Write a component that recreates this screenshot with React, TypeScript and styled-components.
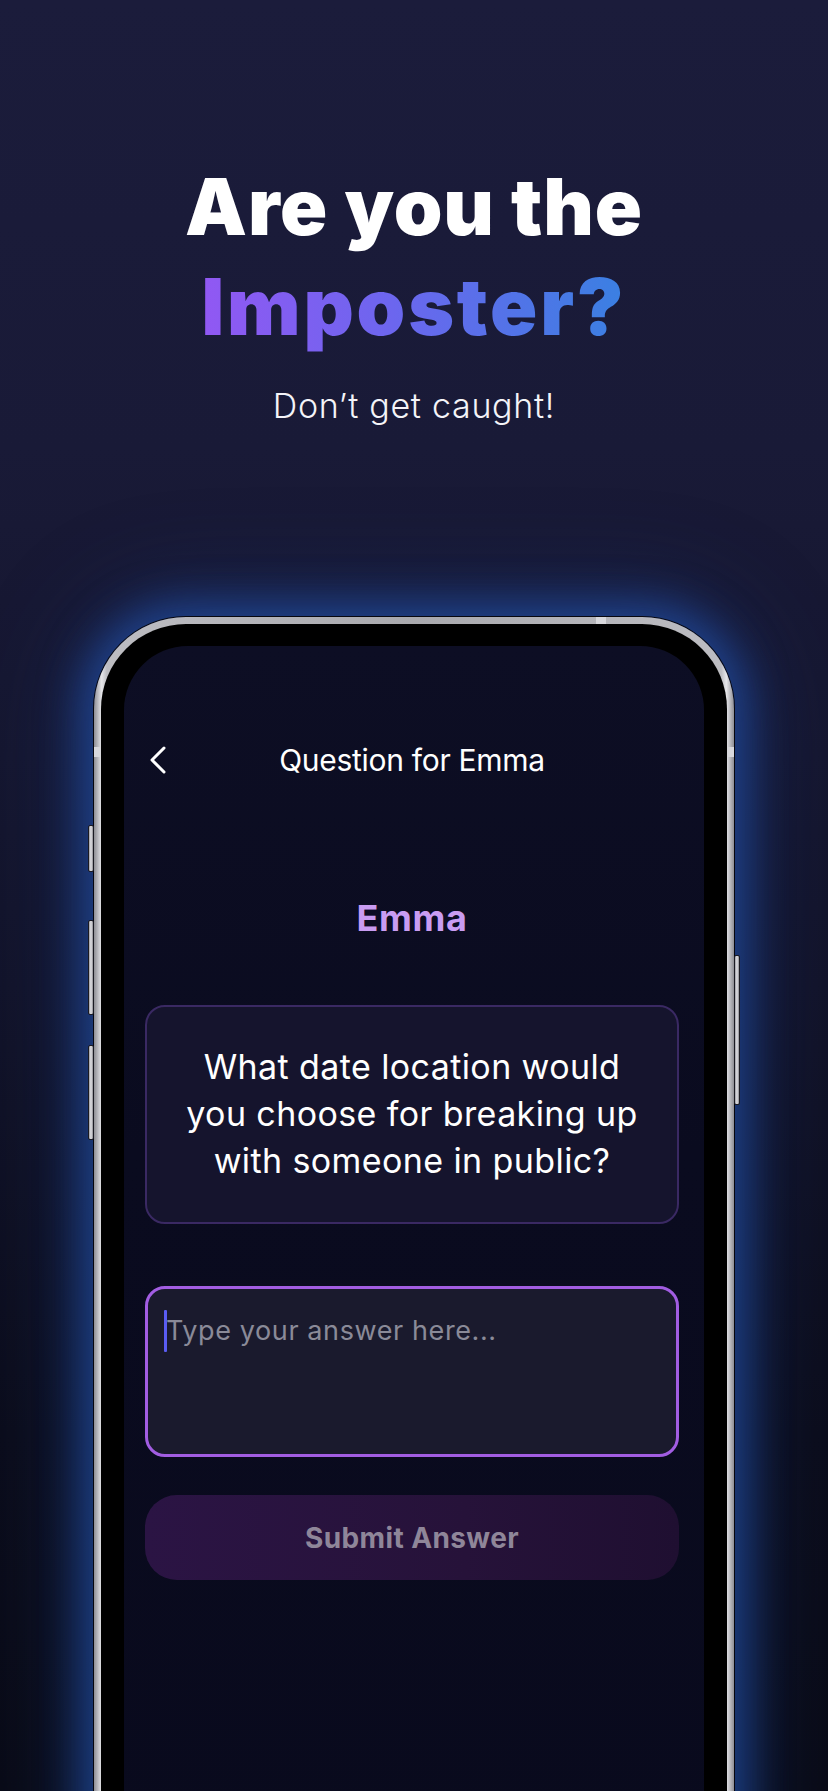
import styled, { createGlobalStyle } from 'styled-components';

const GlobalStyle = createGlobalStyle`
  html, body {
    margin: 0;
    padding: 0;
    background: #0a0b18;
  }
  * {
    box-sizing: border-box;
  }
`;

const Page = styled.div`
  height: 1791px;
  overflow: hidden;
  background: linear-gradient(180deg, #1b1c3b 0%, #191a37 25%, #121329 55%, #0b0c1a 80%, #090a15 100%);
  font-family: Inter, "Noto Sans", sans-serif;
  color: #fff;
`;

const Hero = styled.header`
  padding-top: 157px;
  text-align: center;
`;

const Headline = styled.h1`
  margin: 0;
  font-size: 78px;
  line-height: 100px;
  font-weight: 900;
  letter-spacing: 0.8px;
  color: #fff;
`;

const Accent = styled.span`
  letter-spacing: 2.8px;
  background: linear-gradient(90deg, #9158f3 0%, #6c66ee 45%, #3a80e2 100%);
  -webkit-background-clip: text;
  background-clip: text;
  color: transparent;
`;

const Tagline = styled.p`
  margin: 29px 0 0;
  font-size: 34px;
  line-height: 40px;
  font-weight: 300;
  letter-spacing: 0.7px;
  color: #f4f4f8;
`;

const Phone = styled.div`
  position: relative;
  width: 640px;
  height: 1300px;
  margin: 191px auto 0;
  padding: 7px;
  border-radius: 92px;
  background: linear-gradient(90deg, #8e8e94 0%, #e6e6ea 1.2%, #bdbdc2 2%, #a9a9ae 50%, #bdbdc2 98%, #e6e6ea 98.8%, #8e8e94 100%);
  box-shadow: 0 0 0 1px #07070f, 0 0 40px 14px rgba(34, 80, 168, 0.7), 0 0 90px 30px rgba(28, 60, 130, 0.35);
`;

const SideButton = styled.span<{ $side: 'left' | 'right'; $top: number; $height: number }>`
  position: absolute;
  top: ${(p) => p.$top}px;
  ${(p) => (p.$side === 'left' ? 'left: -6px;' : 'right: -6px;')}
  width: 6px;
  height: ${(p) => p.$height}px;
  border-radius: 2px;
  background: linear-gradient(90deg, #9a9aa0, #e4e4e8 50%, #8a8a90);
  border: 1px solid #1a1a22;
`;

const AntennaBand = styled.span<{ $x?: number; $y?: number }>`
  position: absolute;
  ${(p) => (p.$x !== undefined ? `left: ${p.$x}px; top: 0; width: 10px; height: 7px;` : '')}
  ${(p) => (p.$y !== undefined ? `top: ${p.$y}px; width: 7px; height: 10px;` : '')}
  background: #d8d8dc;
`;

const Bezel = styled.div`
  height: 100%;
  padding: 22px 23px 0;
  border-radius: 85px;
  background: #000;
`;

const Screen = styled.main`
  height: 100%;
  padding: 94px 25px 0 21px;
  border-radius: 64px 64px 0 0;
  background: linear-gradient(180deg, #0d0e24 0%, #0a0b1f 40%, #090a1d 100%);
  display: flex;
  flex-direction: column;
`;

const NavBar = styled.div`
  display: grid;
  grid-template-columns: 48px 1fr 48px;
  align-items: center;
  height: 40px;
`;

const BackButton = styled.button`
  display: flex;
  align-items: center;
  padding: 0 0 0 4px;
  background: none;
  border: none;
  cursor: pointer;
`;

const NavTitle = styled.h2`
  margin: 0;
  text-align: center;
  font-size: 30px;
  line-height: 40px;
  font-weight: 400;
  letter-spacing: -0.3px;
  color: #fff;
`;

const PlayerName = styled.div`
  margin-top: 116px;
  text-align: center;
  font-size: 36px;
  line-height: 44px;
  font-weight: 700;
  letter-spacing: 0.6px;
  color: #c99cf2;
`;

const QuestionCard = styled.div`
  margin-top: 65px;
  padding: 36px 20px 38px;
  border: 2px solid #3a2963;
  border-radius: 20px;
  background: #15142d;
  text-align: center;
  font-size: 34px;
  line-height: 47px;
  letter-spacing: 0.4px;
  color: #fff;
`;

const AnswerBox = styled.div`
  margin-top: 62px;
  height: 171px;
  padding: 21px 16px;
  border: 3px solid #a25de2;
  border-radius: 20px;
  background: #1a1a2d;
  display: flex;
  align-items: flex-start;
`;

const Caret = styled.span`
  width: 3px;
  height: 42px;
  margin-right: -1px;
  border-radius: 1px;
  background: #5a5cf2;
`;

const Placeholder = styled.span`
  font-size: 27px;
  line-height: 42px;
  letter-spacing: 0.6px;
  color: #8a8a98;
`;

const SubmitButton = styled.button`
  margin-top: 38px;
  height: 85px;
  border: none;
  border-radius: 32px;
  background: linear-gradient(90deg, #2b1444 0%, #261239 60%, #1f0f31 100%);
  font-family: Inter, "Noto Sans", sans-serif;
  font-size: 28px;
  font-weight: 700;
  letter-spacing: 0.4px;
  color: #8f8699;
`;

const App = () => {
  return (
    <Page>
      <GlobalStyle />
      <Hero>
        <Headline>
          Are you the
          <br />
          <Accent>Imposter?</Accent>
        </Headline>
        <Tagline>Don’t get caught!</Tagline>
      </Hero>

      <Phone>
        <SideButton $side="left" $top={208} $height={47} />
        <SideButton $side="left" $top={303} $height={95} />
        <SideButton $side="left" $top={428} $height={95} />
        <SideButton $side="right" $top={338} $height={150} />
        <AntennaBand $x={502} />
        <AntennaBand $y={130} style={{ left: 0 }} />
        <AntennaBand $y={130} style={{ right: 0 }} />
        <Bezel>
          <Screen>
            <NavBar>
              <BackButton aria-label="Back">
                <svg width="18" height="28" viewBox="0 0 18 28" fill="none">
                  <path d="M15 2 L3 14 L15 26" stroke="#fff" strokeWidth="3" strokeLinecap="round" strokeLinejoin="round" />
                </svg>
              </BackButton>
              <NavTitle>Question for Emma</NavTitle>
              <span />
            </NavBar>

            <PlayerName>Emma</PlayerName>

            <QuestionCard>
              What date location would
              <br />
              you choose for breaking up
              <br />
              with someone in public?
            </QuestionCard>

            <AnswerBox>
              <Caret />
              <Placeholder>Type your answer here...</Placeholder>
            </AnswerBox>

            <SubmitButton disabled>Submit Answer</SubmitButton>
          </Screen>
        </Bezel>
      </Phone>
    </Page>
  );
};

export default App;
